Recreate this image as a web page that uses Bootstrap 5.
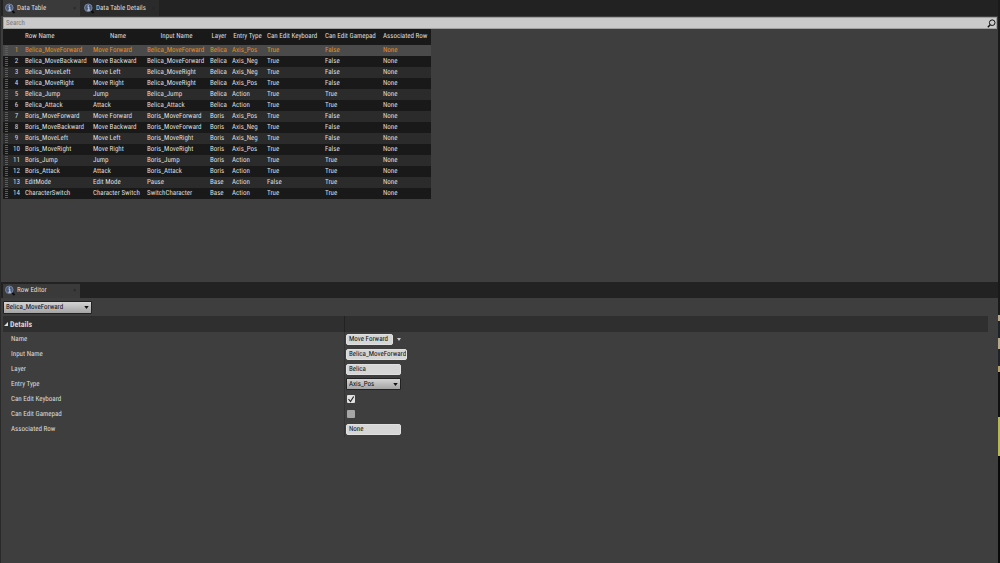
<!DOCTYPE html>
<html lang="en">
<head>
<meta charset="utf-8">
<meta name="viewport" content="width=device-width, initial-scale=1">
<title>Data Table</title>
<link href="https://cdn.jsdelivr.net/npm/bootstrap@5.3.0/dist/css/bootstrap.min.css" rel="stylesheet">
<style>
body{background:#3e3e3e;color:#dcdcdc;font-family:"Roboto Condensed",Roboto,sans-serif;font-size:7px;line-height:11px;text-rendering:geometricPrecision}
button,input,select{text-rendering:inherit}
.pane{flex:1 1 0;min-height:0;border-left:1px solid #2a2a2a}
.tabstrip{background:#222;padding-left:2px}
.tabstrip-top{height:16px}
.tabstrip-bottom{height:16px;padding-top:2px}
.ed-tab{width:77px;height:100%;padding:0 4px 0 2px;gap:2px;background:#3a3a3a;border:0;color:#dcdcdc;font-size:7px;line-height:11px;white-space:nowrap}
.ed-tab.other{width:79px;padding-left:4px;background:#2b2b2b}
.ed-tab .x{font-size:6px;color:#222;margin-left:auto}
.search-row{height:12px;background:#cacaca;border:1px solid #a0a0a0;margin:1px 1px 0 2px}
.search-row input{background:transparent;border:0;outline:0;padding:0 2px;line-height:9px;color:#333;height:10px;min-width:0}
.search-row input::placeholder{color:#7a7a7a;opacity:1}
.rows{width:428px;table-layout:fixed;border-collapse:collapse;margin-left:2px;white-space:nowrap}
.rows th{height:16px;background:#191919;font-weight:400;text-align:center;padding:0 0 1px}
.rows th.start{text-align:left;padding-left:2px}
.rows td{height:11px;padding:0 0 0 2px;line-height:11px}
.rows tbody tr:nth-child(odd){background:#2b2b2b}
.rows tbody tr:nth-child(even){background:#191919}
.rows tbody tr.picked{background:#4a4a4a;color:#e08a20}
.rows td.num{text-align:center;padding:0}
.grip{display:block;width:3px;height:9px;margin-left:2px;background:repeating-linear-gradient(#5c5c5c 0 1px,transparent 1px 2px)}
.combo{appearance:none;height:12px;border:1px solid #222;border-radius:1px;padding:0 10px 0 2px;color:#111;font-size:7px;line-height:10px;background:url("data:image/svg+xml,%3Csvg xmlns='http://www.w3.org/2000/svg' viewBox='0 0 6 4'%3E%3Cpath d='M0 0h6L3 4z' fill='%23111'/%3E%3C/svg%3E") right 2px center/5px 3px no-repeat,linear-gradient(#d4d4d4,#a4a4a4)}
.combo-row{width:89px;height:13px;margin:3px 0 2px 2px}
.group-head{height:16px;margin:0 10px 0 2px;background:#2f2f2f;color:#d4d4d4}
.group-head button{width:342px;border:0;border-right:1px solid #222;background:none;color:inherit;font-weight:700;padding:1px 0 0 1px;gap:2px;font-size:8px;line-height:11px}
.props{padding-left:2px}
.prop label{width:342px;padding-left:8px;border-right:1px solid #333;line-height:15px}
.prop .val{padding-left:1px}
.txt{height:11px;width:55px;border:1px solid #e0e0e0;border-radius:2px;background:#d6d6d6;color:#111;font-size:7px;line-height:9px;padding:0 0 0 2px}
.txt.short{width:47px}.txt.long{width:61px}
.val .combo{width:55px}
.tick{appearance:none;width:8px;height:8px;margin:0 0 0 1px;border:0;border-radius:1px;background:#a6a6a6}
.tick:checked{background:#e0e0e0 url("data:image/svg+xml,%3Csvg xmlns='http://www.w3.org/2000/svg' viewBox='0 0 8 8'%3E%3Cpath d='M1.5 4l2 2.5L6.7 1.5' fill='none' stroke='%23222' stroke-width='1.2'/%3E%3C/svg%3E")}
.edge{width:2px;background:linear-gradient(#1a1a1a 0 56%,#b9a888 56% 57%,#20222a 57% 60%,#b9a888 60% 62%,#20222a 62% 65%,#b9a060 65% 66%,#111 66% 74%,#b8b850 74% 81%,#0a0a0a 81%)}
</style>
</head>
<body class="vh-100 d-flex overflow-hidden">
<svg class="d-none" aria-hidden="true">
<symbol id="glass" viewBox="0 0 10 10"><path d="M6.500 6.500L9.500 9.500" stroke="#0c0c10" stroke-width="1.800"/><circle cx="4.300" cy="4.300" r="3.800" fill="#4a5c80" stroke="#8492ae" stroke-width=".8"/><path d="M3.500 3.500h1.300v3M3.300 6.700h2.800M4.300 1.700v1" fill="none" stroke="#d5dae5" stroke-width="1"/></symbol>
</svg>
<main class="flex-grow-1 d-flex flex-column">
<section class="pane">
<nav class="tabstrip tabstrip-top d-flex">
<button class="ed-tab d-flex align-items-center"><svg class="flex-shrink-0" width="10" height="11"><use href="#glass"/></svg>Data Table<span class="x">×</span></button>
<button class="ed-tab other d-flex align-items-center"><svg class="flex-shrink-0" width="10" height="11"><use href="#glass"/></svg>Data Table Details<span class="x">×</span></button>
</nav>
<div class="search-row d-flex align-items-center"><input class="flex-grow-1" type="text" placeholder="Search" aria-label="Search"><svg width="9" height="9" viewBox="0 0 9 9" fill="none" stroke="#111"><circle cx="5.200" cy="3.700" r="2.800"/><path d="M3.200 5.700L.8 8.200" stroke-width="1.400"/></svg></div>
<table class="rows">
<colgroup><col style="width:7px"><col style="width:13px"><col style="width:68px"><col style="width:54px"><col style="width:63px"><col style="width:22px"><col style="width:35px"><col style="width:58px"><col style="width:58px"><col style="width:50px"></colgroup>
<thead><tr><th></th><th></th><th class="start">Row Name</th><th>Name</th><th>Input Name</th><th>Layer</th><th>Entry Type</th><th class="start">Can Edit Keyboard</th><th class="start">Can Edit Gamepad</th><th class="start">Associated Row</th></tr></thead>
<tbody>
<tr class="picked"><td class="p-0"><i class="grip"></i></td><td class="num">1</td><td>Belica_MoveForward</td><td>Move Forward</td><td>Belica_MoveForward</td><td>Belica</td><td>Axis_Pos</td><td>True</td><td>False</td><td>None</td></tr>
<tr><td class="p-0"><i class="grip"></i></td><td class="num">2</td><td>Belica_MoveBackward</td><td>Move Backward</td><td>Belica_MoveForward</td><td>Belica</td><td>Axis_Neg</td><td>True</td><td>False</td><td>None</td></tr>
<tr><td class="p-0"><i class="grip"></i></td><td class="num">3</td><td>Belica_MoveLeft</td><td>Move Left</td><td>Belica_MoveRight</td><td>Belica</td><td>Axis_Neg</td><td>True</td><td>False</td><td>None</td></tr>
<tr><td class="p-0"><i class="grip"></i></td><td class="num">4</td><td>Belica_MoveRight</td><td>Move Right</td><td>Belica_MoveRight</td><td>Belica</td><td>Axis_Pos</td><td>True</td><td>False</td><td>None</td></tr>
<tr><td class="p-0"><i class="grip"></i></td><td class="num">5</td><td>Belica_Jump</td><td>Jump</td><td>Belica_Jump</td><td>Belica</td><td>Action</td><td>True</td><td>True</td><td>None</td></tr>
<tr><td class="p-0"><i class="grip"></i></td><td class="num">6</td><td>Belica_Attack</td><td>Attack</td><td>Belica_Attack</td><td>Belica</td><td>Action</td><td>True</td><td>True</td><td>None</td></tr>
<tr><td class="p-0"><i class="grip"></i></td><td class="num">7</td><td>Boris_MoveForward</td><td>Move Forward</td><td>Boris_MoveForward</td><td>Boris</td><td>Axis_Pos</td><td>True</td><td>False</td><td>None</td></tr>
<tr><td class="p-0"><i class="grip"></i></td><td class="num">8</td><td>Boris_MoveBackward</td><td>Move Backward</td><td>Boris_MoveForward</td><td>Boris</td><td>Axis_Neg</td><td>True</td><td>False</td><td>None</td></tr>
<tr><td class="p-0"><i class="grip"></i></td><td class="num">9</td><td>Boris_MoveLeft</td><td>Move Left</td><td>Boris_MoveRight</td><td>Boris</td><td>Axis_Neg</td><td>True</td><td>False</td><td>None</td></tr>
<tr><td class="p-0"><i class="grip"></i></td><td class="num">10</td><td>Boris_MoveRight</td><td>Move Right</td><td>Boris_MoveRight</td><td>Boris</td><td>Axis_Pos</td><td>True</td><td>False</td><td>None</td></tr>
<tr><td class="p-0"><i class="grip"></i></td><td class="num">11</td><td>Boris_Jump</td><td>Jump</td><td>Boris_Jump</td><td>Boris</td><td>Action</td><td>True</td><td>True</td><td>None</td></tr>
<tr><td class="p-0"><i class="grip"></i></td><td class="num">12</td><td>Boris_Attack</td><td>Attack</td><td>Boris_Attack</td><td>Boris</td><td>Action</td><td>True</td><td>True</td><td>None</td></tr>
<tr><td class="p-0"><i class="grip"></i></td><td class="num">13</td><td>EditMode</td><td>Edit Mode</td><td>Pause</td><td>Base</td><td>Action</td><td>False</td><td>True</td><td>None</td></tr>
<tr><td class="p-0"><i class="grip"></i></td><td class="num">14</td><td>CharacterSwitch</td><td>Character Switch</td><td>SwitchCharacter</td><td>Base</td><td>Action</td><td>True</td><td>True</td><td>None</td></tr>
</tbody></table>
</section>
<section class="pane">
<nav class="tabstrip tabstrip-bottom d-flex"><button class="ed-tab d-flex align-items-center"><svg class="flex-shrink-0" width="10" height="11"><use href="#glass"/></svg>Row Editor<span class="x">×</span></button></nav>
<select class="combo combo-row d-block" aria-label="Row"><option>Belica_MoveForward</option></select>
<div class="group-head d-flex"><button class="d-flex align-items-center"><svg width="4" height="4" viewBox="0 0 4 4"><path d="M4 0v4H0z" fill="#ddd"/></svg>Details</button></div>
<form class="props">
<div class="prop d-flex"><label for="f1">Name</label><div class="val d-flex align-items-center"><input class="txt short" id="f1" value="Move Forward"><svg class="ms-1" width="4" height="3" viewBox="0 0 4 3"><path d="M0 0h4L2 3z" fill="#ccc"/></svg></div></div>
<div class="prop d-flex"><label for="f2">Input Name</label><div class="val d-flex align-items-center"><input class="txt long" id="f2" value="Belica_MoveForward"></div></div>
<div class="prop d-flex"><label for="f3">Layer</label><div class="val d-flex align-items-center"><input class="txt" id="f3" value="Belica"></div></div>
<div class="prop d-flex"><label for="f4">Entry Type</label><div class="val d-flex align-items-center"><select class="combo" id="f4"><option>Axis_Pos</option></select></div></div>
<div class="prop d-flex"><label for="f5">Can Edit Keyboard</label><div class="val d-flex align-items-center"><input class="tick" type="checkbox" id="f5" checked></div></div>
<div class="prop d-flex"><label for="f6">Can Edit Gamepad</label><div class="val d-flex align-items-center"><input class="tick" type="checkbox" id="f6"></div></div>
<div class="prop d-flex"><label for="f7">Associated Row</label><div class="val d-flex align-items-center"><input class="txt" id="f7" value="None"></div></div>
</form>
</section>
</main>
<div class="edge"></div>
<script src="https://cdn.jsdelivr.net/npm/bootstrap@5.3.0/dist/js/bootstrap.bundle.min.js"></script>
</body>
</html>
